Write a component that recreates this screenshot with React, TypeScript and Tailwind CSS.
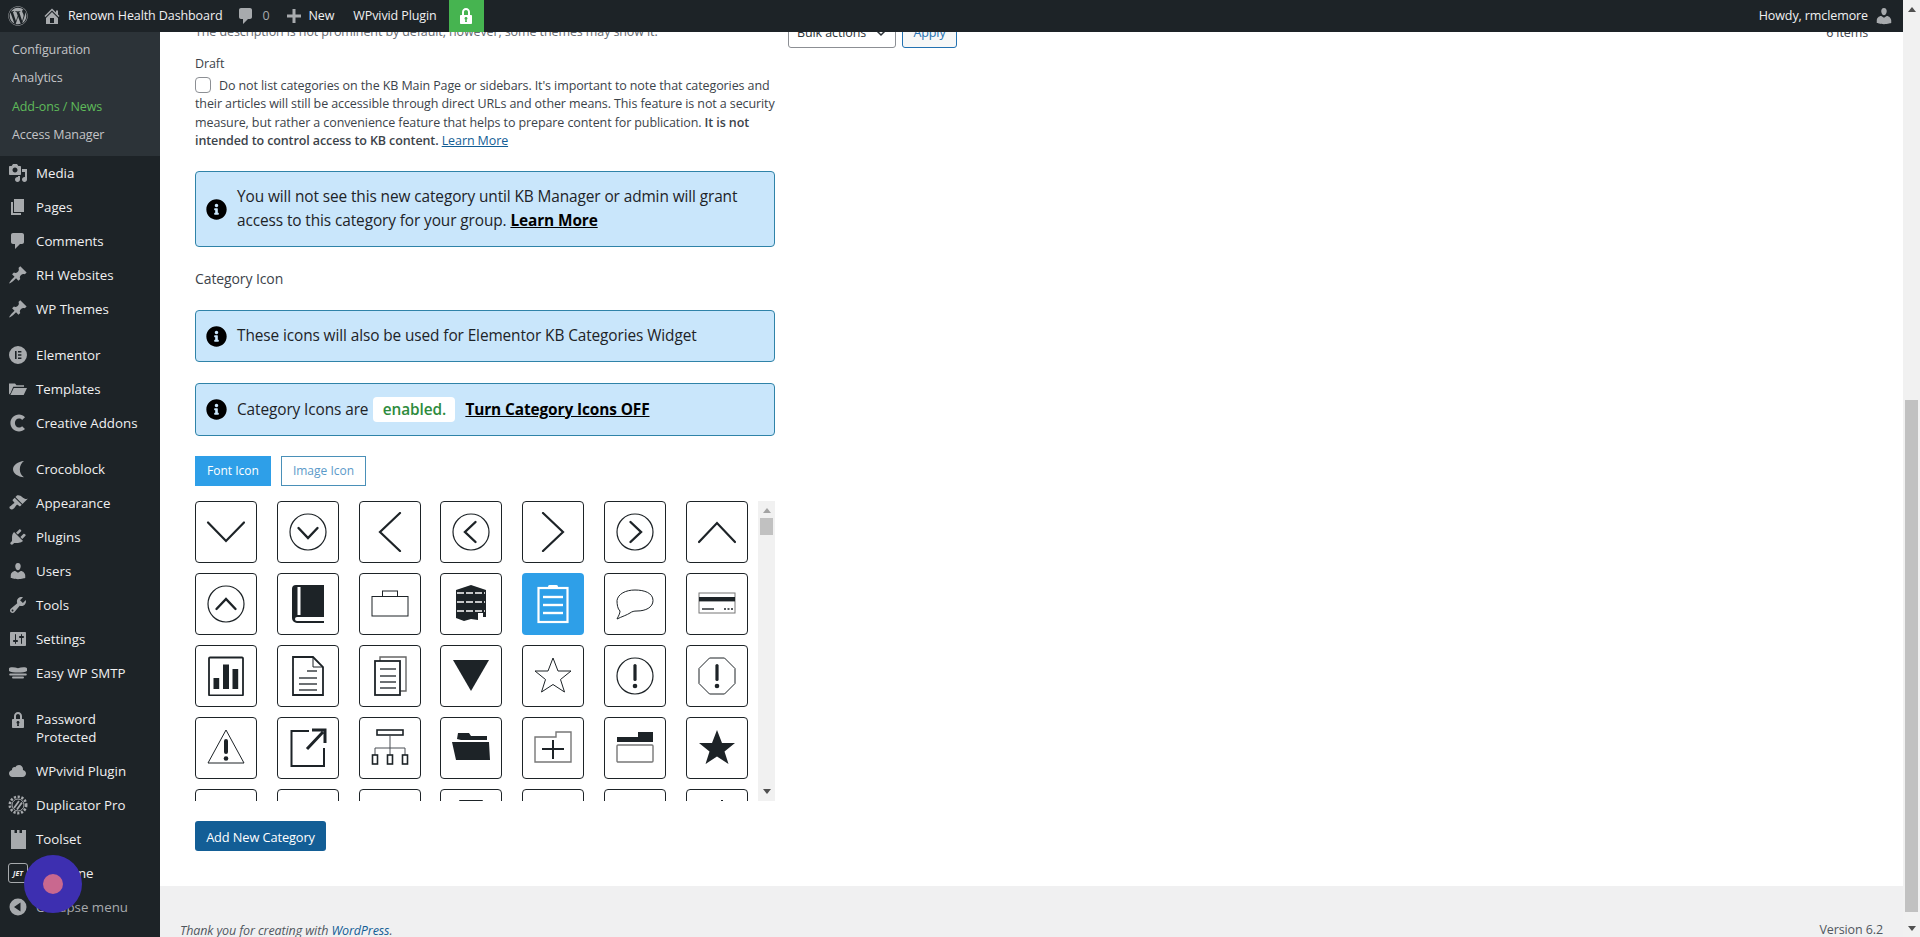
import type { ReactNode } from "react";
import { FaWordpress, FaInfoCircle } from "react-icons/fa";

const homePath = "M16 8.5l1.53 1.53-1.06 1.06L10 4.62l-6.47 6.47-1.06-1.06L10 2.5l4 4v-2h2v4zm-6-2.46l6 5.99V18H4v-5.97zM12 17v-5H8v5h4z";
const commentPath = "M5 2h9c1.1 0 2 .9 2 2v7c0 1.1-.9 2-2 2h-2l-5 5v-5H5c-1.1 0-2-.9-2-2V4c0-1.1.9-2 2-2z";
const mediaPath = "M13 11V4c0-.55-.45-1-1-1h-1.67L9 1H5L3.67 3H2c-.55 0-1 .45-1 1v7c0 .55.45 1 1 1h10c.55 0 1-.45 1-1zM7 4.5c1.38 0 2.5 1.12 2.5 2.5S8.38 9.5 7 9.5 4.5 8.38 4.5 7 5.62 4.5 7 4.5zM14 6h5v10.5c0 1.38-1.12 2.5-2.5 2.5S14 17.88 14 16.5s1.12-2.5 2.5-2.5c.17 0 .34.02.5.05V9h-3V6zm-4 8.05V13h2v3.5c0 1.38-1.12 2.5-2.5 2.5S7 17.88 7 16.5 8.12 14 9.5 14c.17 0 .34.02.5.05z";
const pagesPath = "M6 15V2h10v13H6zm-1 1h8v2H3V5h2v11z";
const pinPath = "M10.44 3.02l1.82-1.82 6.36 6.35-1.83 1.82c-1.05-.68-2.48-.57-3.41.36l-.75.75c-.92.93-1.04 2.35-.35 3.41l-1.83 1.82-2.41-2.41-2.8 2.79c-.42.42-3.38 2.71-3.8 2.29s1.86-3.39 2.28-3.81l2.79-2.79L4.1 9.36l1.83-1.82c1.05.69 2.48.57 3.4-.36l.75-.75c.93-.92 1.05-2.35.36-3.41z";
const brushPath = "M14.48 11.06L7.41 3.99l1.5-1.5c.5-.56 2.3-.47 3.51.32 1.21.8 1.43 1.28 2.91 2.1 1.18.64 2.45 1.26 4.45.85zm-.71.71L6.7 4.7 4.93 6.47c-.39.39-.39 1.02 0 1.41l1.06 1.06c.39.39.39 1.03 0 1.42-.6.6-1.43 1.11-2.21 1.69-.35.26-.7.53-1.01.84C1.43 13.23.91 14.66 2.1 15.85s2.62.67 3.97-.68c.31-.31.58-.66.84-1.01.58-.78 1.09-1.61 1.69-2.21.39-.39 1.02-.39 1.41 0l1.06 1.06c.39.39 1.02.39 1.41 0z";
const plugPath = "M13.11 4.36L9.87 7.6 8 5.73l3.24-3.24c.35-.34 1.05-.2 1.56.32.52.51.66 1.21.31 1.55zm-8 1.77l.91-1.12 9.01 9.01-1.19.84c-.71.71-2.63 1.16-3.82 1.16H6.14L4.9 17.26c-.59.59-1.54.59-2.12 0-.59-.58-.59-1.53 0-2.12l1.24-1.24v-3.88c0-1.13.4-3.19 1.09-3.89zm7.26 3.97l3.24-3.24c.34-.35 1.04-.21 1.55.31.52.51.66 1.21.31 1.55l-3.24 3.25z";
const userPath = "M10 9.25c-2.27 0-2.73-3.44-2.73-3.44C7 4.02 7.82 2 9.97 2c2.16 0 2.98 2.02 2.71 3.81 0 0-.41 3.44-2.68 3.44zm0 2.57L12.72 10c2.39 0 4.52 2.33 4.52 4.53v2.49s-3.65 1.13-7.24 1.13c-3.65 0-7.24-1.13-7.24-1.13v-2.49c0-2.25 1.94-4.48 4.47-4.48z";
const toolsPath = "M16.68 9.77c-1.34 1.34-3.3 1.67-4.95.99l-5.41 6.52c-.99.99-2.59.99-3.58 0s-.99-2.59 0-3.57l6.52-5.42c-.68-1.65-.35-3.61.99-4.95 1.28-1.28 3.12-1.62 4.72-1.06l-2.89 2.89 2.82 2.82 2.86-2.87c.53 1.58.18 3.39-1.08 4.65zM3.81 16.21c.4.39 1.04.39 1.43 0 .4-.4.4-1.04 0-1.43-.39-.4-1.03-.4-1.43 0-.39.39-.39 1.03 0 1.43z";
const settingsPath = "M18 16V4c0-.55-.45-1-1-1H3c-.55 0-1 .45-1 1v12c0 .55.45 1 1 1h14c.55 0 1-.45 1-1zM8 11h1c.55 0 1 .45 1 1s-.45 1-1 1H8v1.5c0 .28-.22.5-.5.5s-.5-.22-.5-.5V13H6c-.55 0-1-.45-1-1s.45-1 1-1h1V5.5c0-.28.22-.5.5-.5s.5.22.5.5V11zm5-2h-1c-.55 0-1-.45-1-1s.45-1 1-1h1V5.5c0-.28.22-.5.5-.5s.5.22.5.5V7h1c.55 0 1 .45 1 1s-.45 1-1 1h-1v5.5c0 .28-.22.5-.5.5s-.5-.22-.5-.5V9z";
const lockPath = "M14 9h1c.55 0 1 .45 1 1v7c0 .55-.45 1-1 1H5c-.55 0-1-.45-1-1v-7c0-.55.45-1 1-1h1V6c0-2.2 1.8-4 4-4s4 1.8 4 4v3zm-2 0V6c0-1.1-.9-2-2-2s-2 .9-2 2v3h4zm-1 7l-.36-2.15c.51-.24.86-.75.86-1.35 0-.83-.67-1.5-1.5-1.5s-1.5.67-1.5 1.5c0 .6.35 1.11.86 1.35L9 16h2z";
const cloudPath = "M14.9 9c1.8.2 3.1 1.7 3.1 3.5 0 1.9-1.6 3.5-3.5 3.5h-10C2.6 16 1 14.4 1 12.5 1 10.7 2.3 9.3 4.1 9 4 8.9 4 8.7 4 8.5 4 7.1 5.1 6 6.5 6c.3 0 .7.1.9.2C8.1 4.9 9.4 4 11 4c2.2 0 4 1.8 4 4 0 .4-.1.7-.1 1z";

function Dash({ d, className = "" }: { d: string; className?: string }) {
  return (
    <svg viewBox="0 0 20 20" className={`w-5 h-5 shrink-0 fill-current ${className}`}>
      <path fillRule="evenodd" d={d} />
    </svg>
  );
}

const sideIcon = (children: ReactNode) => (
  <svg viewBox="0 0 20 20" className="w-5 h-5 shrink-0 fill-current">{children}</svg>
);

const elementorIcon = sideIcon(
  <path fillRule="evenodd" d="M10 1a9 9 0 1 1 0 18 9 9 0 0 1 0-18zM7 6v8h1.6V6H7zm3 0v1.6h3.4V6H10zm0 3.2v1.6h3.4V9.2H10zm0 3.2V14h3.4v-1.6H10z" />
);
const folderIcon = sideIcon(
  <path d="M1 4.5h6l1.5 1.7H16v1.6H5.2L2.6 14 1 15.5zM5.8 9H19l-3.3 7H2.4z" />
);
const creativeIcon = sideIcon(
  <path d="M17 4.2C15.4 2.5 13.2 1.6 11 1.6 6.2 1.6 2.4 5.4 2.4 10.1s3.8 8.4 8.6 8.4c2.3 0 4.4-.9 6-2.5l-2.9-2.7c-.8.9-1.9 1.3-3.1 1.3-2.3 0-4.1-2-4.1-4.5S8.7 5.6 11 5.6c1.2 0 2.3.5 3.1 1.3z" />
);
const crocoIcon = sideIcon(
  <path d="M16 2C10 2.5 5 6 5 10.2s5 7.5 11 8c-2.5-1.8-4.2-4.5-4.2-8S13.5 3.8 16 2z" />
);
const smtpIcon = sideIcon(
  <>
    <path d="M1 5.5C1 4 6 3.5 10 5.2 14 3.5 19 4 19 5.5V8c-3 2-15 2-18 0z" />
    <rect x="1.2" y="10.4" width="17.6" height="2" rx="1" />
    <rect x="4" y="13.6" width="12" height="2" rx="1" />
  </>
);
const duplicatorIcon = (
  <svg viewBox="0 0 20 20" className="w-5 h-5 shrink-0 fill-none stroke-current">
    <circle cx="10" cy="10" r="8.2" strokeWidth="2.6" strokeDasharray="2.2 1.6" />
    <circle cx="10" cy="10" r="6" strokeWidth="1" />
    <path d="M6 13l5-7M9 14.5l5-7" strokeWidth="1.8" />
  </svg>
);
const toolsetIcon = sideIcon(
  <path d="M3 1h3.5v3H9V1h2.5v3H14V1h4v19H3z" />
);
const collapseIcon = sideIcon(
  <path fillRule="evenodd" d="M10 1.5a8.5 8.5 0 1 1 0 17 8.5 8.5 0 0 1 0-17zM12.5 5.5L6 10l6.5 4.5z" />
);
const jetIcon = (
  <span className="w-5 h-5 shrink-0 border border-[#a7aaad] rounded-[3px] flex items-center justify-center text-[7px] font-bold italic text-[#f0f0f1] leading-none">JET</span>
);

type MenuItem = { label: string; icon: ReactNode; tall?: boolean; gap?: boolean };

const menu: MenuItem[] = [
  { label: "Media", icon: <Dash d={mediaPath} /> },
  { label: "Pages", icon: <Dash d={pagesPath} /> },
  { label: "Comments", icon: <Dash d={commentPath} /> },
  { label: "RH Websites", icon: <Dash d={pinPath} /> },
  { label: "WP Themes", icon: <Dash d={pinPath} /> },
  { label: "Elementor", icon: elementorIcon, gap: true },
  { label: "Templates", icon: folderIcon },
  { label: "Creative Addons", icon: creativeIcon },
  { label: "Crocoblock", icon: crocoIcon, gap: true },
  { label: "Appearance", icon: <Dash d={brushPath} /> },
  { label: "Plugins", icon: <Dash d={plugPath} /> },
  { label: "Users", icon: <Dash d={userPath} /> },
  { label: "Tools", icon: <Dash d={toolsPath} /> },
  { label: "Settings", icon: <Dash d={settingsPath} /> },
  { label: "Easy WP SMTP", icon: smtpIcon },
  { label: "Password Protected", icon: <Dash d={lockPath} />, tall: true, gap: true },
  { label: "WPvivid Plugin", icon: <Dash d={cloudPath} /> },
  { label: "Duplicator Pro", icon: duplicatorIcon },
  { label: "Toolset", icon: toolsetIcon },
  { label: "JetEngine", icon: jetIcon },
];

function Sidebar() {
  return (
    <aside className="relative w-[160px] shrink-0 bg-[#1d2327] text-[13.3px] leading-[18px] tracking-normal text-[#f0f0f1]">
      <div className="bg-[#2c3338] h-[124px] pt-1 pl-3 text-[12.5px] tracking-[-0.1px] text-[#c3c4c7]">
        <div className="h-[28.3px] flex items-center">Configuration</div>
        <div className="h-[28.3px] flex items-center">Analytics</div>
        <div className="h-[28.3px] flex items-center text-[#5fbb5a]">Add-ons / News</div>
        <div className="h-[28.3px] flex items-center">Access Manager</div>
      </div>
      {menu.map((m) => (
        <div key={m.label} className={`flex items-center ${m.tall ? "h-[52px]" : "h-[34px]"} ${m.gap ? "mt-3" : ""}`}>
          <span className={`w-9 pl-2 shrink-0 text-[#a7aaad] ${m.tall ? "self-start pt-2" : ""}`}>{m.icon}</span>
          <span className={m.tall ? "w-[90px]" : ""}>{m.label}</span>
        </div>
      ))}
      <div className="flex items-center h-[34px] text-[#a7aaad]">
        <span className="w-9 pl-2 shrink-0">{collapseIcon}</span>
        <span>Collapse menu</span>
      </div>
      {/* recording cursor dot */}
      <div className="absolute left-[24px] top-[823px] w-[58px] h-[58px] rounded-full bg-[#3d2fb0] flex items-center justify-center">
        <div className="w-5 h-5 rounded-full bg-[#c9688f]" />
      </div>
    </aside>
  );
}

function AdminBar() {
  return (
    <header className="h-8 shrink-0 bg-[#1d2327] flex items-center text-[#f0f0f1]">
      <FaWordpress className="ml-2 w-5 h-5 text-[#a7aaad]" />
      <Dash d={homePath} className="ml-[14px] text-[#a7aaad]" />
      <span className="ml-[6px]">Renown Health Dashboard</span>
      <Dash d={commentPath} className="ml-[14px] text-[#a7aaad]" />
      <span className="ml-[6px] text-[#a7aaad]">0</span>
      <svg viewBox="0 0 20 20" className="ml-[14px] w-5 h-5 fill-[#a7aaad]"><path d="M11.5 3v5.5H17v3h-5.5V17h-3v-5.5H3v-3h5.5V3z" /></svg>
      <span className="ml-[5px]">New</span>
      <span className="ml-[19px]">WPvivid Plugin</span>
      <div className="ml-3 w-[35px] h-8 bg-[#46b450] flex items-center justify-center text-white">
        <Dash d={lockPath} />
      </div>
      <span className="ml-auto">Howdy, rmclemore</span>
      <Dash d={userPath} className="ml-[6px] mr-[9px] text-[#a7aaad]" />
    </header>
  );
}

function Notice({ h, children }: { h: string; children: ReactNode }) {
  return (
    <div className={`${h} flex items-center border border-[#2f83a8] rounded bg-[#c9e6fb] pl-[10px] text-[15.4px] leading-6 tracking-[-0.1px] text-[#1d2327]`}>
      <FaInfoCircle className="w-[21px] h-[21px] shrink-0 text-black" />
      <div className="ml-[10px]">{children}</div>
    </div>
  );
}

const s = { fill: "none", stroke: "#1d2327" };

const Circle = () => <circle cx="20" cy="20" r="18" {...s} strokeWidth="1.2" />;

const bigBar = (points: string) => <polyline points={points} {...s} strokeWidth="2.2" strokeLinecap="round" />;
const smallBar = (points: string) => <polyline points={points} {...s} strokeWidth="2.4" strokeLinecap="round" />;

const bang = (
  <>
    <rect x="18.4" y="8" width="3.2" height="17" rx="1.6" fill="#1d2327" />
    <circle cx="20" cy="30" r="2.3" fill="#1d2327" />
  </>
);

const lines = (x1: number, x2: number, ys: number[], color = "#1d2327", w = 1.4) =>
  ys.map((y) => <line key={y} x1={x1} x2={x2} y1={y} y2={y} stroke={color} strokeWidth={w} />);

const starPts = "20,2 25,15 38,15 27.5,23.5 31.5,36 20,28.5 8.5,36 12.5,23.5 2,15 15,15";

const icons: ReactNode[] = [
  bigBar("2,10.5 20,29 38,10.5"),
  <><Circle />{smallBar("10.5,16 20,26 29.5,16")}</>,
  bigBar("30,1 10,20 30,39"),
  <><Circle />{smallBar("24.5,10 14,20 24.5,30")}</>,
  bigBar("10,1 30,20 10,39"),
  <><Circle />{smallBar("15.5,10 26,20 15.5,30")}</>,
  bigBar("2,30 20,11 38,30"),

  <><Circle />{smallBar("10.5,25 20,15 29.5,25")}</>,
  <>
    <path d="M8 1h28v32H9a2 2 0 0 0 0 4h27v2H9a5 5 0 0 1-5-5V5a4 4 0 0 1 4-4z" fill="#1d2327" />
    <rect x="9.5" y="3" width="3" height="28" fill="#fff" />
  </>,
  <>
    <rect x="2" y="12.5" width="36" height="19.5" {...s} strokeWidth="1" />
    <rect x="12.5" y="7" width="15" height="5.5" {...s} strokeWidth="1" />
  </>,
  <>
    <path d="M5 6l15-5 15 5v27h-3v-4h-5v7l-7-1-7 2-8-3z" fill="#1d2327" />
    <g strokeDasharray="7 2">{lines(6, 34, [9, 18, 27], "#fff", 1.4)}</g>
  </>,
  <>
    <rect x="5.5" y="4" width="29" height="34" fill="none" stroke="#fff" strokeWidth="2.2" />
    <rect x="15" y="1" width="10" height="4" rx="1.5" fill="#fff" />
    {lines(10, 30, [13, 21, 29], "#fff", 2.4)}
  </>,
  <path d="M20 6c9.5 0 18 3 18 10.5 0 7-7.5 10.5-16 10.5-3 0-5 .5-7 2-3 2-8 3.5-13 6 1.5-3 3-5.5 3-8C2.5 25 2 20 2 16.5 3 10 10.5 6 20 6z" {...s} strokeWidth="1" />,
  <>
    <rect x="2" y="9" width="36" height="20" fill="none" stroke="#777" strokeWidth="1" />
    <rect x="2" y="13" width="36" height="4.4" fill="#1d2327" />
    {lines(5, 17, [25], "#1d2327", 1.4)}
    <line x1="27" x2="36" y1="25" y2="25" stroke="#1d2327" strokeWidth="1.4" strokeDasharray="2 1.5" />
  </>,

  <>
    <rect x="3" y="1.5" width="34" height="38" rx="1" {...s} strokeWidth="1.8" />
    <rect x="7.5" y="22" width="5.7" height="11" fill="#1d2327" />
    <rect x="17" y="8.5" width="6" height="24.5" fill="#1d2327" />
    <rect x="26.5" y="13" width="5.7" height="20" fill="#1d2327" />
  </>,
  <>
    <path d="M5 1h20l10 10v28H5z" {...s} strokeWidth="1.8" />
    <path d="M25 1v10h10" {...s} strokeWidth="1" />
    {lines(19, 29, [15], "#1d2327", 1.3)}
    {lines(11, 29, [22, 28, 34], "#1d2327", 1.3)}
  </>,
  <>
    <path d="M10 5V1h26v34h-6" fill="none" stroke="#666" strokeWidth="1.4" />
    <rect x="5" y="5" width="25" height="34" {...s} strokeWidth="1.8" />
    {lines(10, 26, [13, 20, 26, 32], "#1d2327", 1.3)}
  </>,
  <polygon points="2,4 38,4 20,35" fill="#1d2327" />,
  <polygon points={starPts} {...s} strokeWidth="1" />,
  <><Circle />{bang}</>,
  <><polygon points="12.5,2 27.5,2 38,12.5 38,27.5 27.5,38 12.5,38 2,27.5 2,12.5" {...s} strokeWidth="1" />{bang}</>,

  <>
    <polygon points="20,2 38,35 2,35" {...s} strokeWidth="1" />
    <rect x="18" y="11" width="4" height="15" rx="2" fill="#1d2327" />
    <circle cx="20" cy="30.5" r="2.3" fill="#1d2327" />
  </>,
  <>
    <path d="M21 3H3.5v35H36V20" {...s} strokeWidth="2" />
    <path d="M19 21L35 4M24 2h13v13" {...s} strokeWidth="3" />
  </>,
  <>
    <rect x="7" y="2" width="26" height="5" {...s} strokeWidth="1.6" />
    <path d="M20 7v20M5 27v-7h30v7" fill="none" stroke="#4a4f54" strokeWidth="1" />
    <rect x="2.5" y="27" width="5" height="9" {...s} strokeWidth="1.6" />
    <rect x="17.5" y="27" width="5" height="9" {...s} strokeWidth="1.6" />
    <rect x="32.5" y="27" width="5" height="9" {...s} strokeWidth="1.6" />
  </>,
  <path d="M7 5h11l2 3h16v4H10L6 11zM1 14h37l1 18H5z" fill="#1d2327" />,
  <>
    <path d="M2 9h21V4h15v30H2z" fill="none" stroke="#777" strokeWidth="1.4" />
    {lines(9, 31, [21], "#1d2327", 2)}
    <line x1="20" x2="20" y1="12" y2="31" stroke="#1d2327" strokeWidth="2" />
  </>,
  <>
    <path d="M2 9h21V4h15v10H2z" fill="#1d2327" />
    <rect x="2" y="17" width="36" height="17" rx="1" fill="none" stroke="#777" strokeWidth="1.4" />
  </>,
  <polygon points={starPts} fill="#1d2327" />,

  null,
  null,
  null,
  <rect x="8" y="0" width="24" height="3" rx="1" fill="#1d2327" />,
  null,
  null,
  <rect x="24" y="0" width="2" height="3" fill="#1d2327" />,
];

function IconGrid() {
  return (
    <div className="mt-[15px] h-[300px] flex overflow-hidden">
      <div className="w-[553px] grid grid-cols-[repeat(7,62px)] justify-between gap-y-[10px] content-start">
        {icons.map((icon, i) => (
          <div
            key={i}
            className={`w-[62px] h-[62px] rounded flex items-center justify-center ${i === 11 ? "bg-[#2e9fe8]" : "border-[1.5px] border-[#1d2327]"}`}
          >
            <svg viewBox="0 0 40 40" className="w-10 h-10">{icon}</svg>
          </div>
        ))}
      </div>
      <div className="ml-[10px] w-[17px] bg-[#f1f1f1] flex flex-col items-center">
        <svg viewBox="0 0 8 5" className="mt-[7px] w-2 h-[5px] fill-[#a3a3a3]"><path d="M4 0l4 5H0z" /></svg>
        <div className="mt-[5px] w-[13px] h-[17px] bg-[#c1c1c1]" />
        <svg viewBox="0 0 8 5" className="mt-auto mb-[7px] w-2 h-[5px] fill-[#505050]"><path d="M0 0h8L4 5z" /></svg>
      </div>
    </div>
  );
}

export default function App() {
  return (
    <div className="h-screen overflow-hidden flex font-['Open_Sans',sans-serif] text-[12.5px] tracking-[-0.1px] leading-[18px] text-[#3c434a]">
      <div className="flex-1 min-w-0 flex flex-col">
        <AdminBar />
        <div className="flex-1 min-h-0 flex">
          <Sidebar />
          <main className="flex-1 min-w-0 flex flex-col">
            <div className="flex-1 overflow-hidden bg-white">
              <div className="-mt-5 px-[35px] flex">
                <div className="w-[580px] shrink-0 pt-[11px]">
                  <p className="text-[#646970]">The description is not prominent by default, however, some themes may show it.</p>
                  <div className="mt-[14px]">Draft</div>
                  <p className="mt-1 h-[74px] leading-[18.4px]">
                    <span className="inline-block align-[-3px] w-4 h-4 mr-2 rounded-[4px] border border-[#8c8f94] bg-white" />
                    Do not list categories on the KB Main Page or sidebars. It's important to note that categories and their articles will still be accessible through direct URLs and other means. This feature is not a security measure, but rather a convenience feature that helps to prepare content for publication.{" "}
                    <b className="font-semibold">It is not intended to control access to KB content.</b>{" "}
                    <a className="text-[#135e96] underline">Learn More</a>
                  </p>
                  <div className="mt-5">
                    <Notice h="h-[76px]">
                      You will not see this new category until KB Manager or admin will grant access to this category for your group.{" "}
                      <a className="font-bold text-black underline">Learn More</a>
                    </Notice>
                  </div>
                  <div className="mt-[23px] text-[14px] leading-[18px] font-medium">Category Icon</div>
                  <div className="mt-[22px]">
                    <Notice h="h-[52px]">These icons will also be used for Elementor KB Categories Widget</Notice>
                  </div>
                  <div className="mt-[21px]">
                    <Notice h="h-[53px]">
                      <span className="flex items-center">
                        Category Icons are
                        <span className="ml-[5px] h-[25px] w-[82px] rounded bg-white text-[#2e8b3d] font-semibold flex items-center justify-center">enabled.</span>
                        <a className="ml-[10px] font-bold text-black underline">Turn Category Icons OFF</a>
                      </span>
                    </Notice>
                  </div>
                  <div className="mt-5 flex gap-[10px] text-xs leading-[18px] tracking-normal">
                    <span className="h-[30px] w-[76px] bg-[#2e9fe8] text-white flex items-center justify-center">Font Icon</span>
                    <span className="h-[30px] w-[85px] border border-[#4a90b8] text-[#5b9ac9] flex items-center justify-center">Image Icon</span>
                  </div>
                  <IconGrid />
                  <button className="mt-5 h-[30px] w-[131px] rounded-[3px] bg-[#135e96] pt-px text-[12.8px] text-white">Add New Category</button>
                </div>
                <div className="flex-1 ml-[13px] mt-[6px] flex justify-between">
                  <div className="flex gap-[6px]">
                    <div className="h-[30px] w-[108px] rounded-[3px] border border-[#8c8f94] pl-2 flex items-center text-[#2c3338]">
                      Bulk actions
                      <svg viewBox="0 0 12 8" className="ml-[9px] w-3 h-2 fill-none stroke-[#2c3338] stroke-[1.5]"><path d="M1 1l5 5 5-5" /></svg>
                    </div>
                    <div className="h-[30px] w-[55px] rounded-[3px] border border-[#2271b1] bg-[#f6f7f7] text-[#2271b1] flex items-center justify-center">Apply</div>
                  </div>
                  <div className="h-[30px] flex items-center">6 items</div>
                </div>
              </div>
            </div>
            <footer className="h-[51px] shrink-0 bg-[#f0f0f1] px-5 flex items-end justify-between text-[#50575e]">
              <span className="italic mb-[-3px]">Thank you for creating with <a className="text-[#135e96]">WordPress</a>.</span>
              <span className="mb-[-2px]">Version 6.2</span>
            </footer>
          </main>
        </div>
      </div>
      <div className="w-[17px] shrink-0 bg-[#f1f1f1] flex flex-col items-center">
        <svg viewBox="0 0 8 5" className="mt-[7px] w-2 h-[5px] fill-[#505050]"><path d="M4 0l4 5H0z" /></svg>
        <div className="mt-[388px] w-[13px] h-[512px] bg-[#c1c1c1]" />
        <svg viewBox="0 0 8 5" className="mt-[14px] w-2 h-[5px] fill-[#505050]"><path d="M0 0h8L4 5z" /></svg>
      </div>
    </div>
  );
}
